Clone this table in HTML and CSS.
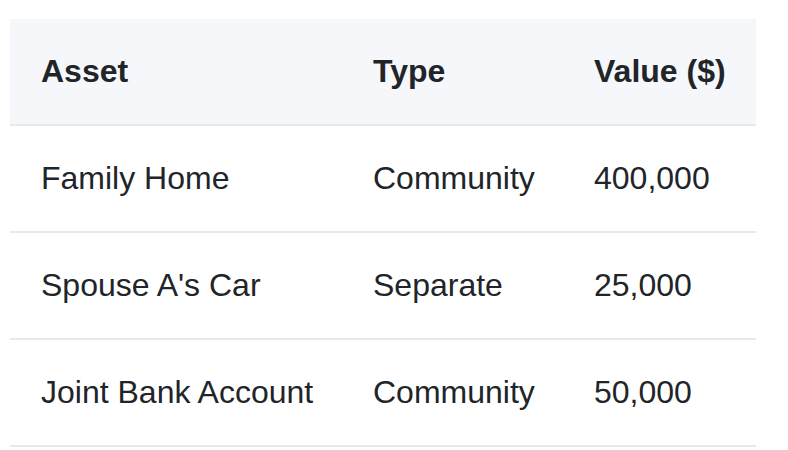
FILE: index.html
```html
<!DOCTYPE html>
<html lang="en">
<head>
<meta charset="utf-8">
<title>Assets</title>
<link rel="stylesheet" href="styles.css">
</head>
<body>
<div class="wrap">
  <table class="assets">
    <colgroup>
      <col class="c-asset">
      <col class="c-type">
      <col class="c-value">
    </colgroup>
    <thead>
      <tr><th>Asset</th><th>Type</th><th>Value ($)</th></tr>
    </thead>
    <tbody>
      <tr><td>Family Home</td><td>Community</td><td>400,000</td></tr>
      <tr><td>Spouse A's Car</td><td>Separate</td><td>25,000</td></tr>
      <tr><td>Joint Bank Account</td><td>Community</td><td>50,000</td></tr>
    </tbody>
  </table>
</div>
</body>
</html>
```
FILE: styles.css
```css
html, body {
  margin: 0;
  padding: 0;
  background: #ffffff;
}
.wrap {
  padding: 19px 0 0 10px;
}
.assets {
  width: 746px;
  border-collapse: collapse;
  table-layout: fixed;
  font-family: "Liberation Sans", Arial, sans-serif;
  font-size: 32px;
  color: #212529;
}
.c-asset { width: 332px; }
.c-type { width: 221px; }
.c-value { width: 193px; }
.assets th,
.assets td {
  text-align: left;
  vertical-align: middle;
  padding: 0 0 0 31px;
  white-space: nowrap;
  border-bottom: 2px solid #e9e9ec;
}
.assets thead th {
  background: #f6f7fb;
  font-weight: 700;
  height: 105px;
  padding-top: 0;
}
.assets tbody td {
  height: 105px;
}
```
